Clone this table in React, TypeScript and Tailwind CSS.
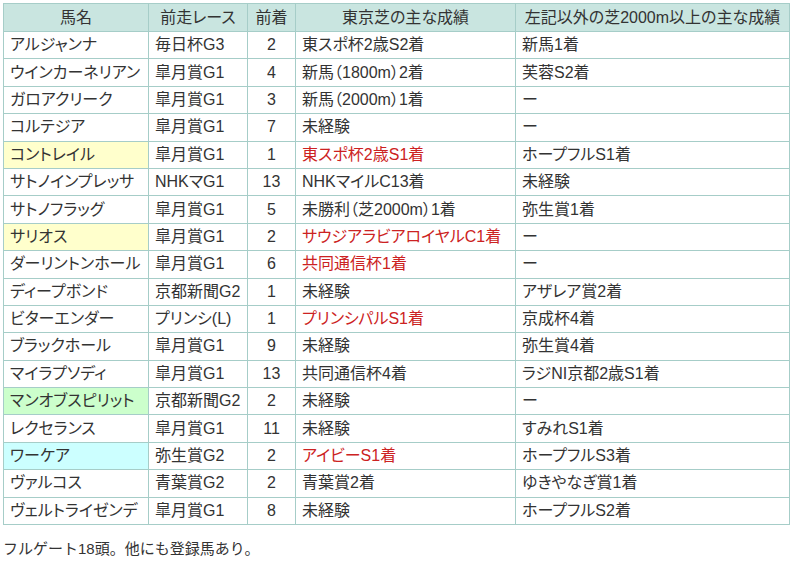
import React from "react";

type Row = {
  name: string;
  prev: string;
  pos: string;
  tokyo: string;
  other: string;
  hl?: "yellow" | "green" | "cyan";
  red?: boolean;
};

const rows: Row[] = [
  { name: "アルジャンナ", prev: "毎日杯G3", pos: "2", tokyo: "東スポ杯2歳S2着", other: "新馬1着" },
  { name: "ウインカーネリアン", prev: "皐月賞G1", pos: "4", tokyo: "新馬（1800m）2着", other: "芙蓉S2着" },
  { name: "ガロアクリーク", prev: "皐月賞G1", pos: "3", tokyo: "新馬（2000m）1着", other: "ー" },
  { name: "コルテジア", prev: "皐月賞G1", pos: "7", tokyo: "未経験", other: "ー" },
  { name: "コントレイル", prev: "皐月賞G1", pos: "1", tokyo: "東スポ杯2歳S1着", other: "ホープフルS1着", hl: "yellow", red: true },
  { name: "サトノインプレッサ", prev: "NHKマG1", pos: "13", tokyo: "NHKマイルC13着", other: "未経験" },
  { name: "サトノフラッグ", prev: "皐月賞G1", pos: "5", tokyo: "未勝利（芝2000m）1着", other: "弥生賞1着" },
  { name: "サリオス", prev: "皐月賞G1", pos: "2", tokyo: "サウジアラビアロイヤルC1着", other: "ー", hl: "yellow", red: true },
  { name: "ダーリントンホール", prev: "皐月賞G1", pos: "6", tokyo: "共同通信杯1着", other: "ー", red: true },
  { name: "ディープボンド", prev: "京都新聞G2", pos: "1", tokyo: "未経験", other: "アザレア賞2着" },
  { name: "ビターエンダー", prev: "プリンシ(L)", pos: "1", tokyo: "プリンシパルS1着", other: "京成杯4着", red: true },
  { name: "ブラックホール", prev: "皐月賞G1", pos: "9", tokyo: "未経験", other: "弥生賞4着" },
  { name: "マイラプソディ", prev: "皐月賞G1", pos: "13", tokyo: "共同通信杯4着", other: "ラジNI京都2歳S1着" },
  { name: "マンオブスピリット", prev: "京都新聞G2", pos: "2", tokyo: "未経験", other: "ー", hl: "green" },
  { name: "レクセランス", prev: "皐月賞G1", pos: "11", tokyo: "未経験", other: "すみれS1着" },
  { name: "ワーケア", prev: "弥生賞G2", pos: "2", tokyo: "アイビーS1着", other: "ホープフルS3着", hl: "cyan", red: true },
  { name: "ヴァルコス", prev: "青葉賞G2", pos: "2", tokyo: "青葉賞2着", other: "ゆきやなぎ賞1着" },
  { name: "ヴェルトライゼンデ", prev: "皐月賞G1", pos: "8", tokyo: "未経験", other: "ホープフルS2着" },
];

const hlClass = {
  yellow: "bg-[#ffffcc]",
  green: "bg-[#ccffcc]",
  cyan: "bg-[#ccffff]",
};

const cell = "border border-[#a6cdc8] pl-[6px] whitespace-nowrap";

export default function App() {
  return (
    <div
      className="w-[796px] h-[567px] bg-white text-[#333333] pt-[3px] pl-[3px]"
      style={{ fontFamily: '"Liberation Sans", "Noto Sans CJK JP", sans-serif' }}
    >
      <table
        className="border-collapse table-fixed w-[786px] text-[16px] leading-none"
        style={{ fontFeatureSettings: '"palt"' }}
      >
        <colgroup>
          <col className="w-[145px]" />
          <col className="w-[99px]" />
          <col className="w-[48px]" />
          <col className="w-[220px]" />
          <col className="w-[274px]" />
        </colgroup>
        <thead>
          <tr className="h-[28px] bg-[#c9e5e0]">
            <th className="border border-[#a6cdc8] font-normal text-center">馬名</th>
            <th className="border border-[#a6cdc8] font-normal text-center">前走レース</th>
            <th className="border border-[#a6cdc8] font-normal text-center">前着</th>
            <th className="border border-[#a6cdc8] font-normal text-center">東京芝の主な成績</th>
            <th className="border border-[#a6cdc8] font-normal text-center whitespace-nowrap">左記以外の芝2000m以上の主な成績</th>
          </tr>
        </thead>
        <tbody>
          {rows.map((r) => (
            <tr key={r.name} className="h-[27.4px]">
              <td className={`${cell} ${r.hl ? hlClass[r.hl] : ""}`}>{r.name}</td>
              <td className={cell}>{r.prev}</td>
              <td className="border border-[#a6cdc8] text-center">{r.pos}</td>
              <td className={`${cell} ${r.red ? "text-[#cc2222]" : ""}`}>{r.tokyo}</td>
              <td className={cell}>{r.other}</td>
            </tr>
          ))}
        </tbody>
      </table>
      <p className="mt-[16px] text-[15px] leading-none">フルゲート18頭。他にも登録馬あり。</p>
    </div>
  );
}
